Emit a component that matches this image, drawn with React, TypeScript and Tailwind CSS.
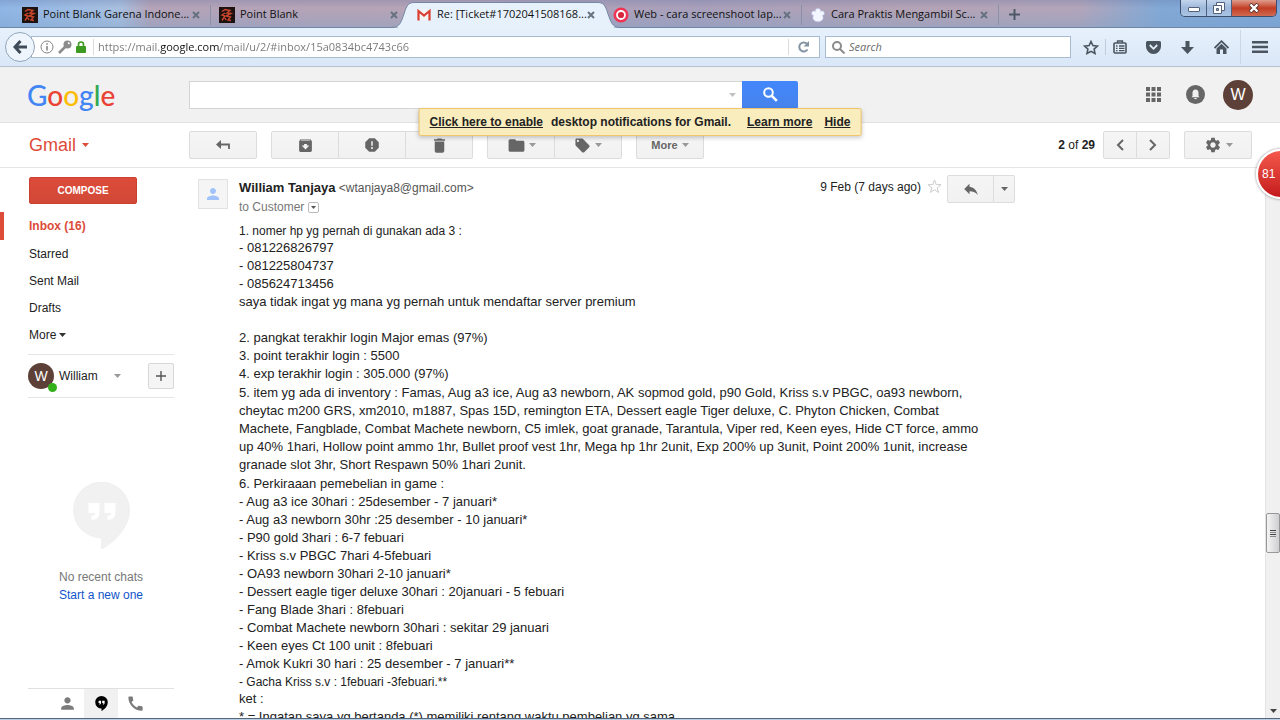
import type { ReactNode } from 'react'
import { MdArchive, MdCall, MdDelete, MdFolder, MdLocalOffer, MdPerson, MdReply, MdReport, MdSettings } from 'react-icons/md'

const Caret = ({ className = 'text-[#999]' }: { className?: string }) => (
    <svg width="7" height="4" viewBox="0 0 7 4" fill="currentColor" className={className} aria-hidden="true">
        <path d="M0 0h7L3.5 4z" />
    </svg>
)

/* ---------- browser window ---------- */

const GameIcon = () => (
    <svg width="16" height="16" viewBox="0 0 16 16" aria-hidden="true">
        <rect width="16" height="16" fill="#1c1210" />
        <g fill="none" stroke="#c8452e" strokeWidth="1.4">
            <path d="M3 4.500l3-2 5 1-3 2.500 4 .5-5 2.500 4.500 1L9 13l3 .5M6 6L3 8l3 1-3 4.500M6 11l1 2" />
        </g>
    </svg>
)

const GmailIcon = () => (
    <svg width="16" height="16" viewBox="0 0 16 16" aria-hidden="true">
        <rect x="2" y="3" width="12" height="10" fill="#f4f4f4" />
        <path d="M2.500 13.500V4L8 8.500 13.500 4v9.500" fill="none" stroke="#d93f33" strokeWidth="2.200" />
    </svg>
)

const TargetIcon = () => (
    <svg width="16" height="16" viewBox="0 0 16 16" aria-hidden="true">
        <circle cx="8" cy="8" r="7.500" fill="#ee3554" />
        <circle cx="8" cy="8" r="4" fill="#d8283f" stroke="#fff" strokeWidth="1.800" />
    </svg>
)

const PawIcon = () => (
    <svg width="16" height="16" viewBox="0 0 16 16" fill="#f3f6ff" stroke="#c3cdf0" strokeWidth="0.600" aria-hidden="true">
        <path d="M8 1.500c2 0 3 1.500 2.600 3 1.600-1 3.600-.2 3.700 1.600.1 1.500-1 2.400-2 2.500 1.400 1.800.9 3.600-.4 4.700C10.500 14.500 9 14.700 8 14.700s-2.500-.2-3.900-1.400C2.800 12.200 2.300 10.400 3.700 8.600c-1-.1-2.100-1-2-2.500.1-1.800 2.100-2.600 3.700-1.600C5 3 6 1.500 8 1.500z" />
    </svg>
)

const tabs: { title: string; icon: ReactNode; active?: boolean; divider?: boolean }[] = [
    { title: 'Point Blank Garena Indone...', icon: <GameIcon />, divider: true },
    { title: 'Point Blank', icon: <GameIcon /> },
    { title: 'Re: [Ticket#1702041508168...', icon: <GmailIcon />, active: true },
    { title: 'Web - cara screenshoot lap...', icon: <TargetIcon />, divider: true },
    { title: 'Cara Praktis Mengambil Sc...', icon: <PawIcon />, divider: true },
]

const TabStrip = () => (
    <div className="flex h-7 border-b border-[#6f86a6] bg-[linear-gradient(180deg,rgba(90,110,160,0.25),rgba(255,255,255,0)_30%,rgba(120,160,200,0.35)_100%),linear-gradient(90deg,#8fb6e6_0,#a9c0e0_120px,#b5a3b8_150px,#b7a4b6_420px,#a9a0bb_700px,#b5a3b5_900px,#b3a5ba_1080px,#82a9d6_1160px,#7ea6d8_100%)]">
        <div role="tablist" className="flex pl-3.5">
            {tabs.map((tab) => (
                <div key={tab.title} className="relative flex w-[197px] items-center">
                    {tab.active && (
                        <svg className="absolute -left-4 top-0" width="228" height="28" viewBox="0 0 228 28" aria-hidden="true">
                            <path
                                d="M0 27.500C8 27.500 9.500 21 12 14C15 4 17 2.500 23 2.500H205C211 2.500 213 4 216 14C218.500 21 220 27.500 228 27.500"
                                fill="#e7f1fc"
                                stroke="#7488a5"
                            />
                            <path d="M6 27.500H222" stroke="#e7f1fc" strokeWidth="2" />
                        </svg>
                    )}
                    <button
                        role="tab"
                        aria-selected={!!tab.active}
                        className="relative mt-0.5 flex min-w-0 flex-1 items-center gap-[5px] pl-2 text-left text-[11px] whitespace-nowrap text-[#111]"
                    >
                        {tab.icon}
                        {tab.title}
                    </button>
                    <button aria-label="Close tab" className="relative mt-0.5 mr-2.5 text-[#66727f]">
                        <svg width="8" height="8" viewBox="0 0 8 8" stroke="currentColor" strokeWidth="2">
                            <path d="M1 1l6 6M7 1L1 7" />
                        </svg>
                    </button>
                    {tab.divider && <span className="mt-0.5 h-5 w-px bg-[#8b8fa8]" />}
                </div>
            ))}
        </div>
        <button aria-label="New tab" className="mt-0.5 ml-2.5 text-[#4c5866]">
            <svg width="11" height="11" viewBox="0 0 11 11" stroke="currentColor" strokeWidth="2">
                <path d="M5.500 0v11M0 5.500h11" />
            </svg>
        </button>
        <div className="mr-[3px] ml-auto flex h-[17px] overflow-hidden rounded-b-[5px] border border-t-0 border-[#3d4f6c]">
            <button aria-label="Minimize" className="flex w-[26px] items-end justify-center border-r border-[#4b5f7e] bg-linear-to-b from-[#c4d5ec] via-[#9db8da] to-[#a9c4e4] pb-1">
                <span className="h-[5px] w-3 rounded-[1px] border border-[#55617a] bg-white" />
            </button>
            <button aria-label="Restore" className="flex w-[25px] items-center justify-center border-r border-[#4b5f7e] bg-linear-to-b from-[#c4d5ec] via-[#9db8da] to-[#a9c4e4]">
                <svg width="12" height="12" viewBox="0 0 12 12" fill="#fff" stroke="#55617a">
                    <path d="M3.500.5h8v8h-8z" />
                    <path d="M.5 3.500h8v8h-8z" />
                    <path d="M3.500 6.500h2v2h-2z" fill="#8fa9cc" />
                </svg>
            </button>
            <button aria-label="Close window" className="flex w-11 items-center justify-center bg-linear-to-b from-[#dd9d8c] via-[#c23b22] to-[#cf6a50]">
                <svg width="12" height="10" viewBox="0 0 12 10" fill="none">
                    <path d="M2 1l8 8M10 1L2 9" stroke="#5c3532" strokeWidth="4" />
                    <path d="M2.500 1.500l7 7M9.500 1.500l-7 7" stroke="#fff" strokeWidth="2.400" />
                </svg>
            </button>
        </div>
    </div>
)

const NavBar = () => (
    <div className="flex h-[39px] items-center border-b border-[#b4c1d3] bg-linear-to-b from-[#e7f1fc] to-[#d9e7f7] pl-[5px]">
        <button aria-label="Back" className="relative flex size-[30px] shrink-0 items-center justify-center rounded-full border border-[#93a5bb] bg-[#eef5fd]">
            <svg width="14" height="14" viewBox="0 0 14 14" fill="none" stroke="#3f4b58" strokeWidth="3">
                <path d="M7.500 1L2 7l5.500 6M2.500 7H14" />
            </svg>
        </button>
        <div className="-ml-1 flex h-[22px] flex-1 items-center border border-[#a9bccf] bg-white pl-2">
            <svg width="14" height="14" viewBox="0 0 14 14" fill="none" stroke="#868686" aria-hidden="true">
                <circle cx="7" cy="7" r="6" />
                <path d="M7 6v4.500M7 3.200v1.600" strokeWidth="1.600" />
            </svg>
            <svg className="ml-1" width="14" height="14" viewBox="0 0 14 14" aria-hidden="true">
                <circle cx="9.500" cy="4.500" r="4" fill="#8c8c8c" />
                <path d="M8 6L1 13" stroke="#8c8c8c" strokeWidth="2.600" />
                <circle cx="10.800" cy="3.200" r="1" fill="#fff" />
            </svg>
            <svg className="ml-1" width="10" height="12" viewBox="0 0 10 12" aria-hidden="true">
                <path d="M2.500 6V3.500a2.500 2.500 0 0 1 5 0V6" fill="none" stroke="#3d9a20" strokeWidth="1.600" />
                <rect y="5" width="10" height="7" rx="1" fill="#3d9a20" />
            </svg>
            <span className="ml-[7px] h-4 w-px bg-[#dcdcdc]" />
            <input
                aria-label="Address"
                defaultValue="https://mail.google.com/mail/u/2/#inbox/15a0834bc4743c66"
                className="min-w-0 flex-1 bg-[linear-gradient(90deg,#777_66px,#111_66px,#111_126px,#777_126px)] bg-clip-text pl-1 text-[11px] text-transparent outline-none"
            />
            <span className="h-4 w-px bg-[#dcdcdc]" />
            <button aria-label="Reload" className="flex w-[30px] justify-center">
                <svg width="12" height="12" viewBox="0 0 12 12" fill="none">
                    <path d="M9.500 8.500A4.500 4.500 0 1 1 9 2.800" stroke="#8494a3" strokeWidth="2" />
                    <path d="M11 0v5.500H5.500z" fill="#8494a3" />
                </svg>
            </button>
        </div>
        <label className="ml-[5px] flex h-[22px] w-[246px] items-center border border-[#a9bccf] bg-white pl-1.5">
            <svg width="13" height="13" viewBox="0 0 13 13" fill="none" stroke="#8c8c8c" strokeWidth="2" aria-hidden="true">
                <circle cx="5" cy="5" r="4" />
                <path d="M8 8l4.500 4.500" />
            </svg>
            <input placeholder="Search" aria-label="Search the web" className="min-w-0 flex-1 pl-1 text-[11px] italic outline-none placeholder:text-[#6b6b6b]" />
        </label>
        <div className="flex items-center text-[#4a5560]">
            <button aria-label="Bookmark" className="ml-3 flex w-4 justify-center">
                <svg width="16" height="15" viewBox="0 0 16 15" fill="none" stroke="currentColor" strokeWidth="1.600">
                    <path d="M8 1.500l1.900 4.100 4.500.5-3.300 3 .9 4.400L8 11.300l-4 2.200.9-4.400-3.300-3 4.500-.5z" />
                </svg>
            </button>
            <span className="ml-1.5 h-4 w-px bg-[#c0ccda]" />
            <button aria-label="Library" className="ml-[7px]">
                <svg width="14" height="14" viewBox="0 0 14 14" fill="none" stroke="currentColor" strokeWidth="1.600">
                    <rect x="1" y="3" width="12" height="10" rx="1" />
                    <path d="M4.500 3V1h5v2M3 6h1.500M6 6h5.500M3 8.300h1.500M6 8.300h5.500M3 10.600h1.500M6 10.600h5.500" strokeWidth="1.300" />
                </svg>
            </button>
            <button aria-label="Pocket" className="ml-[19px]">
                <svg width="15" height="13" viewBox="0 0 15 13">
                    <path d="M1.500 0h12A1.500 1.500 0 0 1 15 1.500V5.500a7.500 7.500 0 0 1-15 0V1.500A1.500 1.500 0 0 1 1.500 0z" fill="currentColor" />
                    <path d="M3.800 4L7.500 7.800 11.200 4" fill="none" stroke="#e4eefa" strokeWidth="1.800" />
                </svg>
            </button>
            <button aria-label="Downloads" className="ml-5">
                <svg width="13" height="13" viewBox="0 0 13 13" fill="currentColor">
                    <path d="M4.500 0h4v6H13l-6.500 7L0 6h4.500z" />
                </svg>
            </button>
            <button aria-label="Home" className="ml-5">
                <svg width="15" height="14" viewBox="0 0 15 14">
                    <path d="M0.500 8L7.500 1.200 14.500 8" fill="none" stroke="currentColor" strokeWidth="1.800" />
                    <path d="M2.500 8.500L7.500 3.800l5 4.700V14H9V9.500H6V14H2.500z" fill="currentColor" />
                </svg>
            </button>
            <span className="ml-[11px] h-[34px] w-px bg-[#cbd7e5]" />
            <button aria-label="Open menu" className="mr-3 ml-[11px]">
                <svg width="16" height="12" viewBox="0 0 16 12" fill="currentColor">
                    <path d="M0 0h16v2.500H0zM0 4.700h16v2.500H0zM0 9.400h16v2.500H0z" />
                </svg>
            </button>
        </div>
    </div>
)

/* ---------- mail header and toolbar ---------- */

const Header = () => (
    <header className="relative flex h-14 shrink-0 items-center border-b border-[#e2e2e2] bg-[#f1f1f1] pr-[27px]">
        <a href="#" aria-label="Google" className="w-[189px] shrink-0 pl-[27px] font-['Lato',sans-serif] text-[28px] leading-8 font-medium">
            <span className="text-[#4285f4]">G</span>
            <span className="text-[#ea4335]">o</span>
            <span className="text-[#fbbc05]">o</span>
            <span className="text-[#4285f4]">g</span>
            <span className="text-[#34a853]">l</span>
            <span className="text-[#ea4335]">e</span>
        </a>
        <form className="flex h-7 w-[609px]" onSubmit={(e) => e.preventDefault()}>
            <div className="flex flex-1 items-center border border-r-0 border-[#d4d4d4] bg-white">
                <input aria-label="Search mail" className="min-w-0 flex-1 px-2 text-base outline-none" />
                <button type="button" aria-label="Search options" className="px-1.5">
                    <Caret className="text-[#c0c0c0]" />
                </button>
            </div>
            <button aria-label="Search" className="flex w-14 items-center justify-center rounded-r-xs bg-linear-to-b from-[#4387fd] to-[#4683ea] text-white">
                <svg width="15" height="15" viewBox="0 0 15 15" fill="none" stroke="currentColor">
                    <circle cx="5.500" cy="5.500" r="4.300" strokeWidth="2" />
                    <path d="M8.800 8.800l5 5" strokeWidth="2.600" />
                </svg>
            </button>
        </form>
        <div className="ml-auto flex items-center text-[#666]">
            <button aria-label="Apps">
                <svg width="15" height="15" viewBox="0 0 15 15" fill="currentColor">
                    <path d="M0 0h4v4H0zM5.500 0h4v4h-4zM11 0h4v4h-4zM0 5.500h4v4H0zM5.500 5.500h4v4h-4zM11 5.500h4v4h-4zM0 11h4v4H0zM5.500 11h4v4h-4zM11 11h4v4h-4z" />
                </svg>
            </button>
            <button aria-label="Notifications" className="ml-[25px]">
                <svg width="19" height="19" viewBox="0 0 19 19">
                    <circle cx="9.500" cy="9.500" r="9.500" fill="#666" />
                    <path d="M9.500 4.500c-2 0-3 1.500-3 3.200V11L5.500 12.300h8L12.500 11V7.700C12.500 6 11.500 4.500 9.500 4.500zM8.200 12.900h2.600a1.300 1.300 0 0 1-2.600 0z" fill="#f1f1f1" />
                </svg>
            </button>
            <button aria-label="Account" className="ml-[18px] size-[30px] rounded-full bg-[#5d4037] text-base text-white">
                W
            </button>
        </div>
        <div className="absolute top-[41px] left-1/2 z-10 flex h-7 -translate-x-1/2 items-center rounded-xs border border-[#f0c36d] bg-[#f9edbe] px-2.5 text-xs font-bold whitespace-nowrap text-[#222] shadow-[0_2px_4px_rgba(0,0,0,0.2)]">
            <a href="#" className="underline">Click here to enable</a>
            <span className="ml-2">desktop notifications for Gmail.</span>
            <a href="#" className="ml-4 underline">Learn more</a>
            <a href="#" className="ml-3 underline">Hide</a>
        </div>
    </header>
)

const toolButton =
    'flex h-7 items-center justify-center border border-[#dcdcdc] bg-linear-to-b from-[#f5f5f5] to-[#f1f1f1] text-[#666]'

const Toolbar = () => (
    <div className="flex h-[45px] shrink-0 items-center border-b border-[#e5e5e5] pr-7">
        <button className="flex w-[189px] shrink-0 items-center gap-1.5 pl-[29px] text-lg text-[#dd4b39]">
            Gmail
            <Caret className="text-[#dd4b39]" />
        </button>
        <button aria-label="Back to inbox" className={`${toolButton} w-[68px] rounded-xs`}>
            <svg width="14" height="10" viewBox="0 0 14 10">
                <path d="M3 4.500h10V9" fill="none" stroke="currentColor" strokeWidth="1.800" />
                <path d="M5 0v9L0 4.500z" fill="currentColor" />
            </svg>
        </button>
        <div className="ml-3.5 flex">
            <button aria-label="Archive" className={`${toolButton} w-[68px] rounded-l-xs`}>
                <MdArchive size={17} />
            </button>
            <button aria-label="Report spam" className={`${toolButton} w-[67px] border-l-0`}>
                <MdReport size={18} />
            </button>
            <button aria-label="Delete" className={`${toolButton} w-[67px] rounded-r-xs border-l-0`}>
                <MdDelete size={19} />
            </button>
        </div>
        <div className="ml-3.5 flex">
            <button aria-label="Move to" className={`${toolButton} w-[68px] gap-[3px] rounded-l-xs`}>
                <MdFolder size={19} />
                <Caret />
            </button>
            <button aria-label="Labels" className={`${toolButton} w-[67px] gap-1 rounded-r-xs border-l-0`}>
                <MdLocalOffer size={17} />
                <Caret />
            </button>
        </div>
        <button className={`${toolButton} ml-3.5 w-[68px] gap-1 rounded-xs text-[11px] font-bold`}>
            More
            <Caret />
        </button>
        <span className="ml-auto text-xs text-[#222]">
            <b>2</b> of <b>29</b>
        </span>
        <div className="ml-2 flex">
            <button aria-label="Newer" className={`${toolButton} w-[34px] rounded-l-xs`}>
                <svg width="8" height="12" viewBox="0 0 8 12" fill="none" stroke="currentColor" strokeWidth="2">
                    <path d="M7 1L2 6l5 5" />
                </svg>
            </button>
            <button aria-label="Older" className={`${toolButton} w-[33px] rounded-r-xs border-l-0`}>
                <svg width="8" height="12" viewBox="0 0 8 12" fill="none" stroke="currentColor" strokeWidth="2">
                    <path d="M1 1l5 5-5 5" />
                </svg>
            </button>
        </div>
        <button aria-label="Settings" className={`${toolButton} ml-3.5 w-[68px] gap-1 rounded-xs`}>
            <MdSettings size={18} />
            <Caret />
        </button>
    </div>
)

/* ---------- sidebar ---------- */

const folders = ['Starred', 'Sent Mail', 'Drafts']

const Quotes = () => (
    <path d="M15 21h11v10c0 4-3 7-8 7v-4c2 0 3.500-1 3.500-3H15zM31 21h11v10c0 4-3 7-8 7v-4c2 0 3.500-1 3.500-3H31z" />
)

const HangoutsPin = () => <path d="M28 0a28 28 0 0 1 28 28c0 18-16 33-28 39V56A28 28 0 0 1 28 0z" />

const Sidebar = () => (
    <aside className="flex w-[189px] shrink-0 flex-col pt-[9px] text-xs text-[#222]">
        <button className="ml-[29px] h-[27px] w-[108px] rounded-xs border border-[#c9402f] bg-linear-to-b from-[#dd4b39] to-[#d14836] text-[10px] font-bold text-white">
            COMPOSE
        </button>
        <nav className="mt-2 flex flex-col">
            <a href="#" className="flex h-7 items-center border-l-4 border-[#dd4b39] pl-[25px] font-bold text-[#dd4b39]">
                Inbox (16)
            </a>
            {folders.map((name) => (
                <a key={name} href="#" className="flex h-[27px] items-center pl-[29px]">
                    {name}
                </a>
            ))}
            <button className="flex h-[27px] items-center gap-[3px] pl-[29px]">
                More <Caret className="text-[#333]" />
            </button>
        </nav>
        <div className="mt-1.5 mr-[15px] ml-7 flex h-11 items-center border-y border-[#e5e5e5]">
            <div className="relative size-[26px] shrink-0 rounded-full bg-[#5d4037] text-center text-sm leading-[26px] text-white">
                W
                <span className="absolute -right-[3px] -bottom-[3px] size-[9px] rounded-full bg-[#34b01a]" />
            </div>
            <button className="ml-[5px] flex items-center gap-4">
                William <Caret />
            </button>
            <button aria-label="New conversation" className="ml-auto flex size-[26px] items-center justify-center rounded-xs border border-[#d8d8d8] bg-[#f5f5f5]">
                <svg width="10" height="10" viewBox="0 0 10 10" stroke="#555" strokeWidth="1.400">
                    <path d="M5 0v10M0 5h10" />
                </svg>
            </button>
        </div>
        <div className="mt-[84px] mr-[15px] ml-7 flex flex-col items-center">
            <svg width="57" height="67" viewBox="0 0 56 67" aria-hidden="true">
                <g fill="#f1f1f1" stroke="#e8e8e8" strokeWidth="0.500">
                    <HangoutsPin />
                </g>
                <g fill="#fff">
                    <Quotes />
                </g>
            </svg>
            <p className="mt-[19px] leading-[18px] text-[#777]">No recent chats</p>
            <a href="#" className="leading-[18px] text-[#15c]">
                Start a new one
            </a>
        </div>
        <div className="mt-auto mr-[15px] ml-7 flex h-[30px] justify-center border-t border-[#e0e0e0] text-[#7b7b7b]">
            <button aria-label="Contacts" className="flex w-[34px] items-center justify-center">
                <MdPerson size={19} />
            </button>
            <button aria-label="Conversations" className="flex w-[34px] items-center justify-center bg-[#f1f1f1]">
                <svg width="13" height="15" viewBox="0 0 56 67">
                    <g fill="#000">
                        <HangoutsPin />
                    </g>
                    <g fill="#fff">
                        <Quotes />
                    </g>
                </svg>
            </button>
            <button aria-label="Phone" className="flex w-[34px] items-center justify-center">
                <MdCall size={19} />
            </button>
        </div>
    </aside>
)

/* ---------- message ---------- */

const phoneNumbers = ['- 081226826797', '- 081225804737', '- 085624713456']

const account = [
    '2. pangkat terakhir login Major emas (97%)',
    '3. point terakhir login : 5500',
    '4. exp terakhir login : 305.000 (97%)',
]

const inventory = [
    '5. item yg ada di inventory : Famas, Aug a3 ice, Aug a3 newborn, AK sopmod gold, p90 Gold, Kriss s.v PBGC, oa93 newborn,',
    'cheytac m200 GRS, xm2010, m1887, Spas 15D, remington ETA, Dessert eagle Tiger deluxe, C. Phyton Chicken, Combat',
    'Machete, Fangblade, Combat Machete newborn, C5 imlek, goat granade, Tarantula, Viper red, Keen eyes, Hide CT force, ammo',
    'up 40% 1hari, Hollow point ammo 1hr, Bullet proof vest 1hr, Mega hp 1hr 2unit, Exp 200% up 3unit, Point 200% 1unit, increase',
    'granade slot 3hr, Short Respawn 50% 1hari 2unit.',
]

const purchases = [
    '6. Perkiraaan pemebelian in game :',
    '- Aug a3 ice 30hari : 25desember - 7 januari*',
    '- Aug a3 newborn 30hr :25 desember - 10 januari*',
    '- P90 gold 3hari : 6-7 febuari',
    '- Kriss s.v PBGC 7hari 4-5febuari',
    '- OA93 newborn 30hari 2-10 januari*',
    '- Dessert eagle tiger deluxe 30hari : 20januari - 5 febuari',
    '- Fang Blade 3hari : 8febuari',
    '- Combat Machete newborn 30hari : sekitar 29 januari',
    '- Keen eyes Ct 100 unit : 8febuari',
    '- Amok Kukri 30 hari : 25 desember - 7 januari**',
]

const Lines = ({ items }: { items: string[] }) => (
    <div>
        {items.map((line) => (
            <p key={line}>{line}</p>
        ))}
    </div>
)

const Message = () => (
    <article className="flex w-[826px] items-start gap-[11px] pt-[7px] pl-[9px]">
        <div className="mt-1 flex size-[30px] shrink-0 items-center justify-center border border-[#e2e2e2] bg-[#f5f5f5] text-[#a1c2fa]">
            <MdPerson size={18} />
        </div>
        <div className="min-w-0 flex-1">
            <div className="flex h-12 items-start">
                <div className="mt-[3px] text-xs leading-[19px] text-[#777]">
                    <h3>
                        <b className="text-[13px] text-[#222]">William Tanjaya</b> <span className="text-[#555]">&lt;wtanjaya8@gmail.com&gt;</span>
                    </h3>
                    <div className="flex items-center gap-1">
                        to Customer
                        <button aria-label="Show details" className="flex size-[11px] items-center justify-center rounded-xs border border-[#bbb] text-[#555]">
                            <svg width="5" height="3" viewBox="0 0 5 3" fill="currentColor">
                                <path d="M0 0h5L2.500 3z" />
                            </svg>
                        </button>
                    </div>
                </div>
                <time className="mt-[3px] ml-auto text-xs leading-[19px] text-[#222]">9 Feb (7 days ago)</time>
                <button aria-label="Star" className="mt-1 ml-1.5">
                    <svg width="15" height="15" viewBox="0 0 16 16" fill="none" stroke="#c8c8c8">
                        <path d="M8 1l1.800 4.900 5.200.2-4.100 3.200 1.400 5L8 11.400l-4.300 2.900 1.400-5L1 6.100l5.200-.2z" />
                    </svg>
                </button>
                <div className="ml-[5px] flex">
                    <button aria-label="Reply" className={`${toolButton} w-[47px] rounded-l-xs`}>
                        <MdReply size={18} />
                    </button>
                    <button aria-label="More actions" className={`${toolButton} w-[21px] rounded-r-xs border-l-0`}>
                        <Caret className="text-[#666]" />
                    </button>
                </div>
            </div>
            <div className="flex flex-col gap-px text-[13px] leading-[18px] whitespace-nowrap text-[#222]">
                <div>
                    <p className="text-xs">1. nomer hp yg pernah di gunakan ada 3 :</p>
                    <Lines items={phoneNumbers} />
                    <p>saya tidak ingat yg mana yg pernah untuk mendaftar server premium</p>
                    <br />
                    <Lines items={account} />
                </div>
                <Lines items={inventory} />
                <Lines items={purchases} />
                <div>
                    <p className="text-xs leading-4">- Gacha Kriss s.v : 1febuari -3febuari.**</p>
                    <p>ket :</p>
                    <p>* = Ingatan saya yg bertanda (*) memiliki rentang waktu pembelian yg sama</p>
                </div>
            </div>
        </div>
    </article>
)

const ScrollRail = () => (
    <div className="flex w-[15px] shrink-0 flex-col items-center border-l border-[#e3e3e3] bg-[#f0f0f0]">
        <div className="grow-[345]" />
        <div className="flex h-10 w-3.5 flex-col items-center justify-center gap-px rounded-xs border border-[#979797] bg-linear-to-r from-[#f4f4f4] to-[#cfcfd2]">
            <span className="h-px w-1.5 bg-[#444]" />
            <span className="h-px w-1.5 bg-[#888]" />
            <span className="h-px w-1.5 bg-[#444]" />
            <span className="h-px w-1.5 bg-[#888]" />
        </div>
        <div className="grow-[156]" />
        <Caret className="mb-[5px] text-[#444]" />
    </div>
)

const App = () => (
    <div className="relative flex h-screen flex-col overflow-hidden bg-white font-['Liberation_Sans',Arial,sans-serif]">
        <div className="shrink-0 font-['Open_Sans','Noto_Sans',sans-serif]">
            <TabStrip />
            <NavBar />
        </div>
        <Header />
        <Toolbar />
        <div className="flex min-h-0 flex-1 border-b border-[#55677c]">
            <Sidebar />
            <main className="min-w-0 flex-1 overflow-hidden">
                <Message />
            </main>
            <ScrollRail />
        </div>
        <div className="h-px shrink-0 bg-[#b9cfe4]" />
        <div className="absolute top-[149px] -right-[26px] flex size-[50px] items-center rounded-full border-2 border-white bg-linear-to-b from-[#f4574b] to-[#c4161c] pl-1 text-xs text-white shadow-[0_0_3px_rgba(0,0,0,0.5)]">
            81
        </div>
    </div>
)

export default App
